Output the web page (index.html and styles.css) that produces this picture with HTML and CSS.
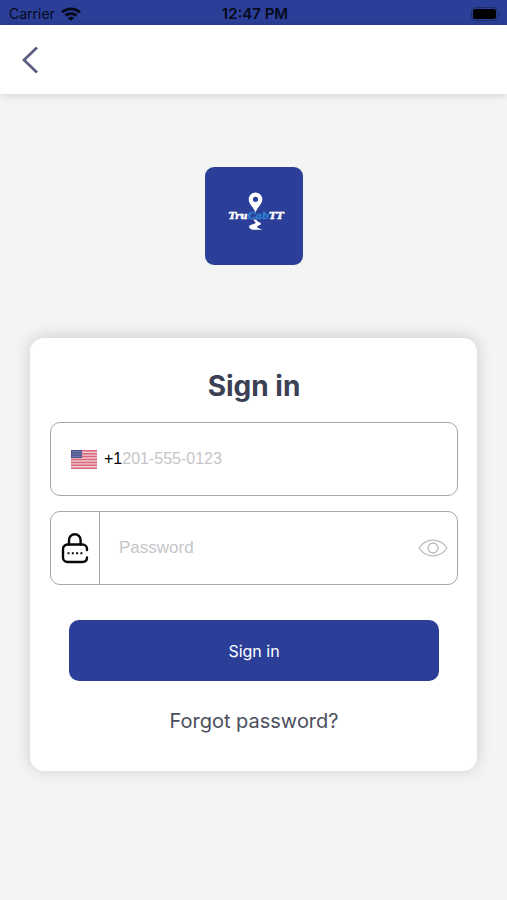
FILE: index.html
```html
<!DOCTYPE html>
<html lang="en">
<head>
<meta charset="utf-8">
<meta name="viewport" content="width=device-width, initial-scale=1">
<title>Sign in</title>
<link rel="stylesheet" href="styles.css">
</head>
<body>
<div class="status">
  <div class="carrier">
    <span>Carrier</span>
    <svg width="20" height="14" viewBox="0 0 18 14" preserveAspectRatio="none" aria-hidden="true">
      <g fill="none" stroke="#05091a" stroke-width="2.8">
        <path d="M1 5.200C5.500.700 12.500.700 17 5.200"/>
        <path d="M4 8.600c2.800-2.700 7.200-2.700 10 0"/>
      </g>
      <path d="M9 13.800 6.100 10.900c1.600-1.500 4.200-1.500 5.800 0z" fill="#05091a"/>
    </svg>
  </div>
  <time class="clock">12:47 PM</time>
  <svg class="battery" width="30" height="14" viewBox="0 0 30 14" aria-hidden="true">
    <rect x=".5" y=".5" width="26" height="13" rx="4" fill="none" stroke="#202b68"/>
    <rect x="2" y="2" width="23" height="10" rx="2.500" fill="#000"/>
    <path d="M28 5c1.600.5 1.600 3.500 0 4z" fill="#202b68"/>
  </svg>
</div>
<header class="header">
  <button class="back" type="button" aria-label="Back">
    <svg width="16" height="28" viewBox="0 0 16 28" aria-hidden="true"><path d="M15 1.500 2 14l13 12.500" fill="none" stroke="#5c5f80" stroke-width="2.800"/></svg>
  </button>
</header>
<main class="main">
  <svg class="logo" width="98" height="98" viewBox="0 0 98 98" role="img" aria-label="TruCabTT">
    <rect width="98" height="98" rx="9" fill="#2b3f98"/>
    <path fill="#fff" fill-rule="evenodd" d="M50.500 25.500a6.800 6.800 0 0 0-6.800 6.800c0 4.500 4.500 7.500 6.800 13.200 2.300-5.700 6.800-8.700 6.800-13.200a6.800 6.800 0 0 0-6.800-6.800zm0 4.200a2.600 2.600 0 1 1 0 5.200 2.600 2.600 0 0 1 0-5.200z"/>
    <path fill="#fff" d="M48.500 52.500c-.5 2 3.500 2.300 1.500 4-2.500 1-6.500 1.500-6 3.700.5 1.700 3 2.600 5.500 2.600h8c-2-1-5.500-1.700-5.500-3 0-1.200 4-1.500 4-3 0-1.800-5-1.800-4.500-4.300z"/>
    <text class="wordmark" x="51" y="52" text-anchor="middle">Tru<tspan class="wordmark-accent">Cab</tspan>TT</text>
  </svg>
  <form class="card">
    <h1 class="title">Sign in</h1>
    <div class="field phone">
      <svg width="26" height="19" viewBox="0 0 26 19" role="img" aria-label="United States">
        <rect width="26" height="19" fill="#f1cbd0"/>
        <path d="M0 .75h26M0 3.670h26M0 6.580h26M0 9.500h26M0 12.420h26M0 15.330h26M0 18.250h26" stroke="#d8667a" stroke-width="1.500"/>
        <rect width="11" height="8" fill="#484f88"/>
        <path d="M1.500 1.700h9M1.500 4h9M1.500 6.300h9" stroke="#aeb4d2" stroke-dasharray="1 1"/>
      </svg>
      <label class="code" for="phone">+1</label>
      <input class="input" id="phone" type="tel" placeholder="201-555-0123">
    </div>
    <div class="field password">
      <label class="lock" for="password" aria-label="Password">
        <svg width="28" height="32" viewBox="0 0 28 32" aria-hidden="true">
          <g fill="none" stroke="#080808" stroke-width="2.400" stroke-linecap="round">
            <path d="M8 12.500V8a5.800 5.800 0 0 1 11.600 0v4.500"/>
            <path d="M26 18v-1a4.500 4.500 0 0 0-4.500-4.500h-15A4.500 4.500 0 0 0 2 17v8.500A4.500 4.500 0 0 0 6.500 30h15c2.700 0 4.500-1.800 4.500-4.500"/>
          </g>
          <path d="M6.500 21.200h2M10.800 21.200h2M15.100 21.200h2M19.400 21.200h2" stroke="#080808" stroke-width="2"/>
        </svg>
      </label>
      <input class="input input-large" id="password" type="password" placeholder="Password">
      <button class="eye" type="button" aria-label="Show password">
        <svg width="30" height="18" viewBox="0 0 30 18" aria-hidden="true">
          <g fill="none" stroke="#bdbdbd" stroke-width="1.300"><path d="M1 9C8-1.500 22-1.500 29 9 22 19.500 8 19.500 1 9z"/><circle cx="15" cy="9" r="5"/></g>
        </svg>
      </button>
    </div>
    <button class="submit" type="submit">Sign in</button>
    <a class="forgot" href="#">Forgot password?</a>
  </form>
</main>
</body>
</html>
```
FILE: styles.css
```css
* {
  box-sizing: border-box;
}

body {
  margin: 0;
  min-height: 100vh;
  background: #f4f4f4;
  font-family: Inter, "Liberation Sans", sans-serif;
  color: #3b4055;
}

button {
  border: 0;
  padding: 0;
  background: none;
  font: inherit;
}

svg {
  display: block;
  flex: none;
}

.status {
  display: grid;
  grid-template-columns: 1fr auto 1fr;
  align-items: center;
  padding: 2px 6px 0 9px;
  height: 25px;
  background: #2b3f98;
  color: #05091a;
  font-size: 14px;
}

.carrier {
  display: flex;
  align-items: center;
  gap: 6px;
}

.clock {
  font-size: 15px;
  font-weight: 600;
}

.battery {
  justify-self: end;
}

.header {
  display: flex;
  align-items: center;
  height: 69px;
  padding: 0 22px;
  background: #fff;
  box-shadow: 0 1px 8px rgba(0, 0, 0, 0.14);
}

.main {
  display: flex;
  flex-direction: column;
  align-items: center;
  gap: 73px;
  padding: 73px 30px;
}

.wordmark {
  font: italic bold 10px "DejaVu Serif", serif;
  fill: #fff;
  stroke: #fff;
  stroke-width: 0.5;
}

.wordmark-accent {
  fill: #2f7fd0;
  stroke: #2f7fd0;
}

.card {
  display: flex;
  flex-direction: column;
  width: 100%;
  padding: 28px 19px 36px 20px;
  border-radius: 14px;
  background: #fff;
  box-shadow: 0 -1px 16px rgba(0, 0, 0, 0.17);
}

.title {
  margin: 0 0 16px;
  font-size: 28px;
  line-height: 40px;
  font-weight: 700;
  text-align: center;
}

.field {
  display: flex;
  align-items: center;
  height: 74px;
  border: 1px solid #a3a7aa;
  border-radius: 10px;
}

.phone {
  padding: 0 20px;
}

.code {
  margin-left: 7px;
  color: #000;
  font: 16px "Liberation Sans", sans-serif;
}

.input {
  flex: 1;
  min-width: 0;
  padding: 0;
  border: 0;
  outline: 0;
  background: none;
  color: #000;
  font: 16px "Liberation Sans", sans-serif;
}

.input-large {
  font-size: 17px;
}

.input::placeholder {
  color: #c5c5c9;
}

.password {
  margin-top: 15px;
}

.lock {
  display: flex;
  align-items: center;
  justify-content: center;
  align-self: stretch;
  width: 49px;
  margin-right: 19px;
  border-right: 1px solid #a3a7aa;
}

.eye {
  margin-right: 9px;
}

.submit {
  height: 61px;
  margin: 35px 19px 26px;
  border-radius: 10px;
  background: #2b3f98;
  color: #fff;
  font-size: 16px;
}

.forgot {
  align-self: center;
  color: #4b4e5c;
  font-size: 20px;
  line-height: 28px;
  text-decoration: none;
}
```
